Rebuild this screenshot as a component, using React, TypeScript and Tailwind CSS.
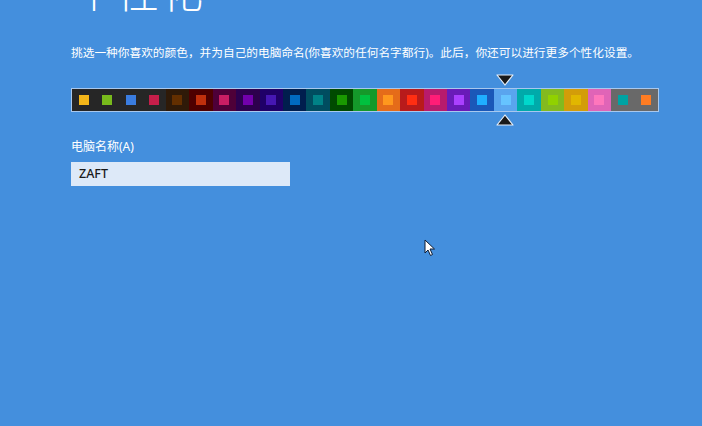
import React from 'react';

type Swatch = { bg: string; sq: string };

// Windows 8 style accent palette (background tile + inner square)
const swatches: Swatch[] = [
  { bg: 'bg-[#262626]', sq: 'bg-[#f4b619]' },
  { bg: 'bg-[#262626]', sq: 'bg-[#78ba1c]' },
  { bg: 'bg-[#262626]', sq: 'bg-[#3a7de0]' },
  { bg: 'bg-[#262626]', sq: 'bg-[#c41e4a]' },
  { bg: 'bg-[#2f1a08]', sq: 'bg-[#632f00]' },
  { bg: 'bg-[#4e0000]', sq: 'bg-[#c1300c]' },
  { bg: 'bg-[#4e0038]', sq: 'bg-[#c81e64]' },
  { bg: 'bg-[#2d004e]', sq: 'bg-[#7200ac]' },
  { bg: 'bg-[#1f0068]', sq: 'bg-[#4617b4]' },
  { bg: 'bg-[#001e4e]', sq: 'bg-[#006ac1]' },
  { bg: 'bg-[#004d60]', sq: 'bg-[#008287]' },
  { bg: 'bg-[#004a00]', sq: 'bg-[#199900]' },
  { bg: 'bg-[#15992a]', sq: 'bg-[#00c13f]' },
  { bg: 'bg-[#e56c19]', sq: 'bg-[#ff981d]' },
  { bg: 'bg-[#b81b1b]', sq: 'bg-[#ff2e12]' },
  { bg: 'bg-[#b81b6c]', sq: 'bg-[#ff1d77]' },
  { bg: 'bg-[#691bb8]', sq: 'bg-[#aa40ff]' },
  { bg: 'bg-[#1b58b8]', sq: 'bg-[#1faeff]' },
  { bg: 'bg-[#5aa5ee]', sq: 'bg-[#66c4ff]' },
  { bg: 'bg-[#00aaaa]', sq: 'bg-[#00d8cc]' },
  { bg: 'bg-[#83ba1f]', sq: 'bg-[#91d100]' },
  { bg: 'bg-[#d39d09]', sq: 'bg-[#e1b700]' },
  { bg: 'bg-[#e064b7]', sq: 'bg-[#ff76bc]' },
  { bg: 'bg-[#696969]', sq: 'bg-[#00a3a3]' },
  { bg: 'bg-[#696969]', sq: 'bg-[#fe7c22]' },
];

const Marker: React.FC<{ up?: boolean }> = ({ up }) => (
  <svg width="18" height="12" viewBox="0 0 18 12">
    {up ? (
      <polygon points="9,1 17,11 1,11" fill="#1a1a1a" stroke="#e8f0fa" strokeWidth="1.2" strokeLinejoin="round" />
    ) : (
      <polygon points="1,1 17,1 9,11" fill="#1a1a1a" stroke="#e8f0fa" strokeWidth="1.2" strokeLinejoin="round" />
    )}
  </svg>
);

const App: React.FC = () => {
  return (
    <div
      className="relative w-[702px] h-[426px] overflow-hidden bg-[#448fdd] text-white pl-[71px]"
      style={{ fontFamily: '"Noto Sans", "Noto Sans CJK SC", sans-serif' }}
    >
      <h1 className="-mt-[29px] ml-[2px] text-[42px] leading-none font-light tracking-[2px]">个性化</h1>

      <p className="mt-[31px] text-[11.7px] leading-[16px]">
        挑选一种你喜欢的颜色，并为自己的电脑命名(你喜欢的任何名字都行)。此后，你还可以进行更多个性化设置。
      </p>

      {/* Colour strip */}
      <div className="relative mt-[28px] w-[588px]">
        <div className="grid h-[24px] border border-[#a8c8ee]" style={{ gridTemplateColumns: 'repeat(25, minmax(0, 1fr))' }}>
          {swatches.map((s, i) => (
            <div key={i} className={`flex items-center justify-center ${s.bg}`}>
              <div className={`w-[10px] h-[10px] ${s.sq}`} />
            </div>
          ))}
        </div>
        <div className="absolute left-[425px] -top-[14px]">
          <Marker />
        </div>
        <div className="absolute left-[425px] top-[26px]">
          <Marker up />
        </div>
      </div>

      <label className="block mt-[27px] text-[12px] leading-[16px]">电脑名称(A)</label>
      <div className="mt-[7px] w-[219px] h-[24px] bg-[#dde9f8] flex items-center px-[8px] text-[12.5px] text-[#1a1a1a] font-medium">
        ZAFT
      </div>

      {/* mouse pointer */}
      <svg className="absolute left-[424px] top-[239px]" width="12" height="18" viewBox="0 0 12 18">
        <path d="M1 1 L1 14 L4 11 L6.5 16.5 L8.5 15.5 L6 10 L10.5 10 Z" fill="#ffffff" stroke="#0d1b33" strokeWidth="1" strokeLinejoin="round" />
      </svg>
    </div>
  );
};

export default App;
